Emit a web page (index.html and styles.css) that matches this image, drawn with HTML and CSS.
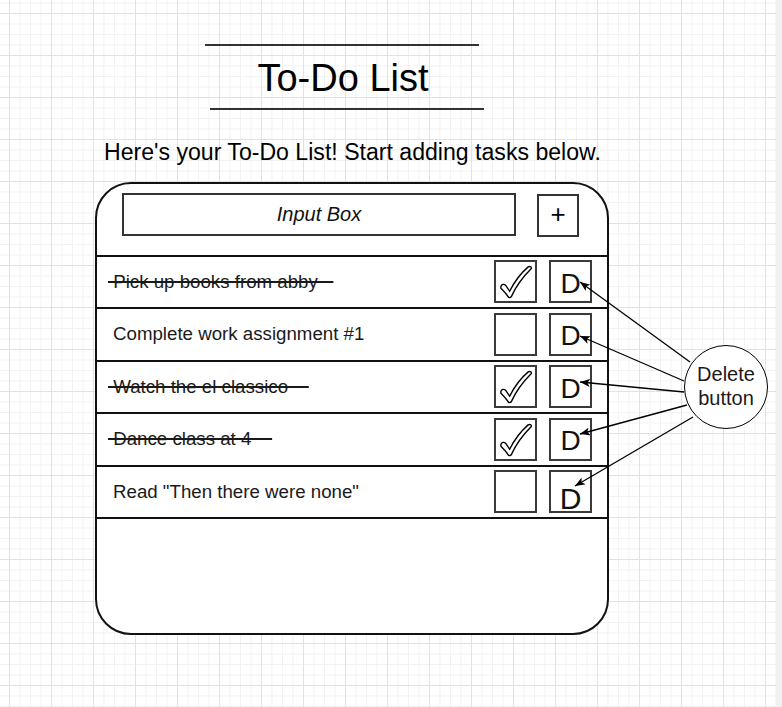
FILE: index.html
```html
<!DOCTYPE html>
<html lang="en">
  <head>
    <meta charset="UTF-8" />
    <meta name="viewport" content="width=device-width, initial-scale=1.0" />
    <title>To-Do List - Wireframe</title>
    <link rel="stylesheet" href="styles.css">
  </head>
  <body>
    <div class="canvas">
      <header class="title-block">
        <div class="rule"></div>
        <h1 class="title">To-Do List</h1>
        <div class="rule rule-bottom"></div>
      </header>

      <p class="intro">Here's your To-Do List! Start adding tasks below.</p>

      <section class="todo">
        <div class="todo-head">
          <div class="input-box">Input Box</div>
          <div class="add-btn">+</div>
        </div>

        <ul class="tasks">
          <li class="task">
            <span class="label done">&nbsp;Pick up books from abby&nbsp;&nbsp;&nbsp;</span>
            <span class="box check">
              <svg viewBox="0 0 40 40" width="39" height="39"><path d="M5 25 C6 23 8 22 10 24 L14 30 C19 20 26 11 33 5 C35 4 37 5 36 7 C29 14 21 24 16 35 C15 37 13 37 12 35 C10 32 7 29 5 27 Z"/></svg>
            </span>
            <span class="box del">D</span>
          </li>
          <li class="task">
            <span class="label">Complete work assignment #1</span>
            <span class="box check"></span>
            <span class="box del">D</span>
          </li>
          <li class="task">
            <span class="label done">&nbsp;Watch the el classico&nbsp;&nbsp;&nbsp;&nbsp;</span>
            <span class="box check">
              <svg viewBox="0 0 40 40" width="39" height="39"><path d="M5 25 C6 23 8 22 10 24 L14 30 C19 20 26 11 33 5 C35 4 37 5 36 7 C29 14 21 24 16 35 C15 37 13 37 12 35 C10 32 7 29 5 27 Z"/></svg>
            </span>
            <span class="box del">D</span>
          </li>
          <li class="task">
            <span class="label done">&nbsp;Dance class at 4&nbsp;&nbsp;&nbsp;&nbsp;</span>
            <span class="box check">
              <svg viewBox="0 0 40 40" width="39" height="39"><path d="M5 25 C6 23 8 22 10 24 L14 30 C19 20 26 11 33 5 C35 4 37 5 36 7 C29 14 21 24 16 35 C15 37 13 37 12 35 C10 32 7 29 5 27 Z"/></svg>
            </span>
            <span class="box del">D</span>
          </li>
          <li class="task">
            <span class="label">Read "Then there were none"</span>
            <span class="box check"></span>
            <span class="box del del-low">D</span>
          </li>
        </ul>
      </section>

      <!-- callout arrows pointing at the delete buttons -->
      <svg class="arrows" width="776" height="707">
        <defs>
          <marker id="head" markerUnits="userSpaceOnUse" markerWidth="11" markerHeight="8" refX="10" refY="4" orient="auto">
            <path d="M0 0 L10 4 L0 8 L2.5 4 Z" fill="#000"/>
          </marker>
        </defs>
        <line x1="690" y1="362" x2="580" y2="282" marker-end="url(#head)"/>
        <line x1="684" y1="381" x2="580" y2="336" marker-end="url(#head)"/>
        <line x1="684" y1="392" x2="580" y2="382" marker-end="url(#head)"/>
        <line x1="687" y1="405" x2="580" y2="434" marker-end="url(#head)"/>
        <line x1="693" y1="417" x2="575" y2="486" marker-end="url(#head)"/>
      </svg>
      <div class="callout">Delete<br>button</div>
    </div>
  </body>
</html>
```

FILE: styles.css
```css
* {
  box-sizing: border-box;
  margin: 0;
  padding: 0;
}

body {
  font-family: "Liberation Sans", Arial, sans-serif;
  background-color: #f1f1f1;
  color: #000;
}

.canvas {
  position: relative;
  width: 776px;
  min-height: 707px;
  padding-top: 44px;
  background-color: #fff;
  background-image:
    linear-gradient(to right, #e2e2e2 1px, transparent 1px),
    linear-gradient(to bottom, #e2e2e2 1px, transparent 1px),
    linear-gradient(to right, #f2f2f2 1px, transparent 1px),
    linear-gradient(to bottom, #f2f2f2 1px, transparent 1px);
  background-size: 42px 42px, 42px 42px, 10.5px 10.5px, 10.5px 10.5px;
  background-position: 9px 13px, 9px 13px, 9px 2.5px, 9px 2.5px;
}

.title-block {
  margin-left: 205px;
  width: 279px;
}

.rule {
  width: 274px;
  border-top: 2px solid #333;
}

.rule-bottom {
  margin-left: 5px;
  margin-top: 8.5px;
}

.title {
  margin-top: 10.5px;
  padding-right: 3px;
  font-size: 38px;
  font-weight: normal;
  line-height: 43px;
  text-align: center;
}

.intro {
  margin-top: 29px;
  margin-left: 104px;
  font-size: 23.1px;
  line-height: 26px;
}

.todo {
  margin-top: 16.5px;
  margin-left: 95px;
  width: 514px;
  height: 453px;
  border: 2px solid #111;
  border-radius: 36px;
  background-color: #fff;
  overflow: hidden;
}

.todo-head {
  display: flex;
  height: 73px;
  padding: 9px 0 0 25px;
  gap: 21px;
  border-bottom: 2px solid #111;
}

.input-box {
  width: 394px;
  height: 43px;
  border: 2px solid #333;
  font-size: 20px;
  font-style: italic;
  line-height: 39px;
  text-align: center;
  color: #111;
}

.add-btn {
  width: 42px;
  height: 43px;
  margin-top: 1px;
  border: 2px solid #333;
  font-size: 26px;
  line-height: 37px;
  text-align: center;
}

.tasks {
  list-style: none;
}

.task {
  display: flex;
  align-items: center;
  height: 52.5px;
  padding: 0 15px 0 16px;
  border-bottom: 2px solid #111;
  font-size: 18.7px;
  color: #1a1a1a;
}

.label {
  flex: 1;
  white-space: nowrap;
}

.done {
  margin-left: -5px;
  text-decoration: line-through;
  text-decoration-thickness: 1.5px;
}

.box {
  display: flex;
  justify-content: center;
  align-items: center;
  width: 43px;
  height: 43px;
  border: 2px solid #3a3a3a;
  background-color: #fff;
}

.check svg {
  fill: #fff;
  stroke: #000;
  stroke-width: 1.4;
}

.del {
  margin-left: 12px;
  padding-top: 4px;
  font-size: 28px;
  overflow: hidden;
  color: #111;
}

.del-low {
  padding-top: 14px;
  font-size: 30px;
}

.arrows {
  position: absolute;
  top: 0;
  left: 0;
  pointer-events: none;
}

.arrows line {
  stroke: #000;
  stroke-width: 1.3;
}

.callout {
  position: absolute;
  left: 684px;
  top: 345px;
  width: 84px;
  height: 84px;
  padding-top: 16px;
  border: 1.5px solid #000;
  border-radius: 50%;
  background-color: #fff;
  font-size: 20px;
  line-height: 24px;
  text-align: center;
  color: #1a1a1a;
}
```
